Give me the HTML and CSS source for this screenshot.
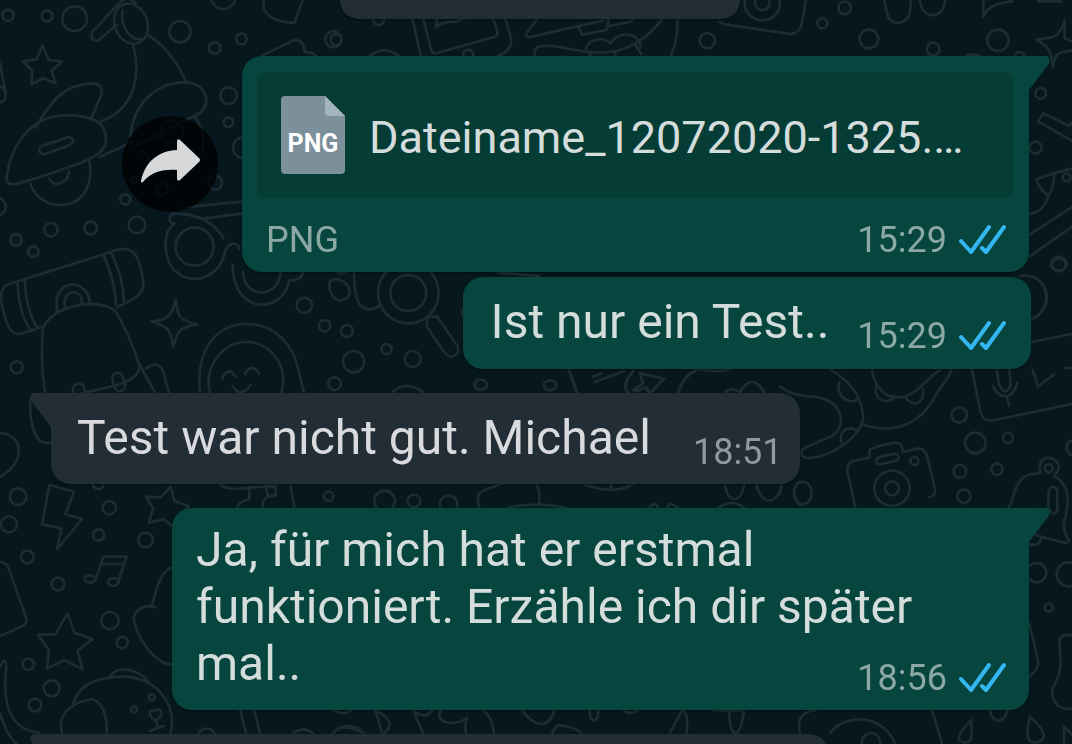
FILE: index.html
```
<!DOCTYPE html>
<html lang="de">
<head>
    <meta charset="UTF-8">
    <meta name="viewport" content="width=device-width, initial-scale=1.0">
    <title>Chat</title>
    <link rel="stylesheet" href="styles.css">
</head>
<body>
    <!-- Wallpaper -->
    <svg class="wallpaper" viewBox="0 0 1072 744" preserveAspectRatio="xMidYMin slice" aria-hidden="true">
        <!-- top left: planets, star, rocket -->
        <g transform="scale(.3333)">
            <circle cx="24" cy="46" r="17"/><circle cx="141" cy="48" r="16"/><circle cx="224" cy="56" r="37"/>
            <circle cx="540" cy="95" r="32"/><circle cx="644" cy="144" r="17"/><circle cx="724" cy="117" r="16"/>
            <circle cx="1008" cy="119" r="16"/><circle cx="686" cy="287" r="25"/><circle cx="685" cy="367" r="14"/>
            <circle cx="730" cy="443" r="31"/><circle cx="376" cy="598" r="15"/><circle cx="411" cy="675" r="25"/>
            <circle cx="272" cy="684" r="19"/><circle cx="153" cy="689" r="20"/><circle cx="48" cy="719" r="17"/>
            <circle cx="100" cy="755" r="16"/><circle cx="645" cy="548" r="21"/><circle cx="486" cy="569" r="18"/>
            <circle cx="-10" cy="620" r="27"/><circle cx="670" cy="-10" r="37"/><circle cx="403" cy="541" r="10"/>
            <path d="M127 136l19 44 39 5-30 28 12 37-39-16-33 20 1-43-28-27 42-6z"/>
            <path d="M0 190l17 90q2 24-17 28M0 258q14 6 17 22"/>
            <path d="M362 5l-86 92q-6 24 16 26l60-50M362 5l20-12 26 16"/>
            <ellipse cx="393" cy="71" rx="49" ry="62" transform="rotate(-22 393 71)"/>
            <path d="M368 32c-10 45 25 90 55 86"/>
            <path d="M400 137c22 80 10 190-100 228M446 107c48 28 92 88 112 140"/>
            <path d="M106 383c54-90 90-130 172-133 24 0 32 16 24 38l-30 72"/>
            <path d="M20 530c10-80 62-184 180-184 80 0 118 22 118 72 0 34-30 50-70 68-60 22-120 46-200 66-22 4-30-4-28-22z"/>
            <path d="M124 439l80-28q18 0 14 16-2 8-84 35-18 0-16-14 0-6 6-9z"/>
            <path d="M91 552c15 44 60 68 105 62 60-8 84-72 72-128M148 535c8 28 54 20 59-20"/>
            <path d="M300 470c40-16 72-30 100-48M392 410c6-100 80-165 166-163 60 4 78 60 44 90l-18 12"/>
            <path d="M402 440l180-92c26 26 34 80 24 110M420 450c40 20 30 60 60 60"/><circle cx="516" cy="395" r="33"/>
            <path d="M792 0c-12 42 32 68 92 68l24-68M785 167l95-45q30-8 34 34l20 2 14 9"/>
            <path d="M726 605l-178 17M616 655l110-15M516 640q-18 28 8 30c-26 18-28 48-28 80M516 640c80 0 130 30 155 75"/>
        </g>
        <!-- middle left: bag, doughnuts, smiley -->
        <g transform="translate(0 240) scale(.3333)">
            <circle cx="584" cy="20" r="57"/><path d="M498 0c-12 150 160 150 178 30 22-34 40-14 42-4"/>
            <path d="M698 75c0 150 150 150 170 46q40 0 40-25"/><path d="M729 96c4 84 110 80 112 0"/>
            <circle cx="48" cy="0" r="17"/><circle cx="100" cy="35" r="15"/><circle cx="50" cy="382" r="18"/>
            <circle cx="913" cy="196" r="23"/><circle cx="974" cy="257" r="17"/><circle cx="1041" cy="273" r="18"/>
            <circle cx="1061" cy="365" r="32"/><circle cx="1160" cy="327" r="15"/><circle cx="1238" cy="357" r="24"/>
            <circle cx="1004" cy="431" r="19"/><circle cx="1225" cy="159" r="91"/><circle cx="1225" cy="159" r="54"/>
            <path d="M1282 230l30 0 62 90q4 30-24 30-12 0-70-92zM1062 96c0 70 10 110 44 112q20 0 38-14"/>
            <path d="M992 122c-12 24 8 60 30 60 24-4 36-26 20-46-12-16-32-24-50-14z"/>
            <path d="M1010 96q14 8 30 0M1178 455q44-36 92 2M1410 190q-34 15-18 42"/>
            <path d="M28 132l330-104c50-10 60 30 72 94 4 40-24 54-80 80M124 262l-64 20c-32 6-44-40-56-96q-6-44 24-54"/>
            <path d="M53 130c2 60 12 100 36 136M75 122c2 60 16 110 38 142M312 48c20 50 34 90 36 146M334 38c22 50 36 90 38 146"/>
            <path d="M172 214c-20-100 92-106 98-22"/><path d="M196 204c-16-60 56-60 50-12"/>
            <path d="M136 460c-14-80-10-120-8-190 20-80 190-100 222-50 30 50 50 100 68 155 4 50-80 66-170 84"/>
            <path d="M418 372l48 88M438 386c30-24 48-10 54 16l14 54M218 458q0-28 18-28t18 28"/>
            <rect x="340" y="398" width="32" height="56" rx="16" transform="rotate(-14 356 426)"/>
            <path d="M527 177c4 50 8 62 65 77-54 8-58 16-72 66-8-50-14-60-66-76 54-4 62-20 73-67z"/>
            <path d="M600 458c-14-130 50-206 140-206 90 0 140 70 152 126l20 80"/>
            <path d="M630 458c-20-80 40-152 108-152 74 0 130 72 106 152M666 416q20-40 40-6M735 402q20-36 42-2M698 438q26 40 54-4"/>
            <path d="M90 480c0 60 8 100 28 120q14 12 36 8M0 580c70 0 80 88 0 130"/>
        </g>
        <!-- bottom left: bolt, note, star, dog -->
        <g transform="translate(0 480) scale(.3333)">
            <circle cx="54" cy="50" r="25"/><circle cx="27" cy="133" r="24"/><circle cx="82" cy="231" r="19"/>
            <circle cx="328" cy="83" r="20"/><circle cx="296" cy="165" r="17"/><circle cx="437" cy="180" r="22"/>
            <circle cx="174" cy="312" r="19"/><circle cx="330" cy="422" r="26"/><circle cx="367" cy="488" r="17"/>
            <circle cx="85" cy="553" r="17"/><circle cx="155" cy="625" r="24"/><circle cx="105" cy="675" r="19"/>
            <circle cx="295" cy="10" r="17"/><circle cx="986" cy="49" r="14"/><circle cx="620" cy="773" r="27"/>
            <path d="M148 15l74 20-26 68 50 14-74 90 12-62-58-12z"/>
            <path d="M512 20l12 44 42 14-48 62-26-22-46 10 14-42-22-36 44 2z"/>
            <path d="M288 296l22-66 70 0-26 76M302 252l70 0"/>
            <path d="M288 296c-10 20-40 12-34-4 10-10 28-6 36 4"/><ellipse cx="340" cy="306" rx="15" ry="12"/>
            <path d="M203 400l20 58 54 20-44 34 14 56-54-28-52 26 6-56-34-46 52 0z"/>
            <path d="M0 246q20 0 26 20l54 152q0 14-16 22l-64 28M516 262c-34 12-46 60-60 116M466 382c-40-14-68 16-64 40 10 50 60 130 114 132"/>
            <path d="M0 560q22-40 18 10c-10 100 10 180 100 188M0 700q20 66 50 92"/>
            <path d="M220 668c20-60 80-80 160-78 100 10 150 90 132 168M186 758c-20-70 60-100 92-100 30 10 44 50 42 100M332 586c30-34 100-10 114 24"/>
            <circle cx="402" cy="689" r="9"/><circle cx="455" cy="652" r="9"/>
            <path d="M450 700q-4-10 12-8 18-8 22 4 4 14-18 26-16-8-16-22M466 722l10 20-24 12M476 742l16-4"/>
            <path d="M660 12q10 16 60 14l110-10M748 20l0 38q-30 4-36 26M796 12l8 36q-20 14-16 36M824 12l4 34-24 4M870 12l14 72"/>
            <path d="M720 690l18 68M762 690l18 68M1000 690q30 20 54 0M880 760q30-24 60 0M1000 758q30-32 80-12"/>
        </g>
        <!-- top middle strip -->
        <g transform="translate(340 0) scale(.3333)">
            <circle cx="116" cy="58" r="17"/><circle cx="1102" cy="122" r="23"/><circle cx="385" cy="164" r="15"/><circle cx="-20" cy="118" r="24"/>
            <path d="M218 57l24 110M250 57l24 94q4 12 18 8l170-48q14-4 10-20l-12-34M290 57l-2 24q14-16 60-16l28-12M496 57l18 60q2 36-40 50M92 167q40-32 84 0"/>
            <path d="M592 57l-34 44q-2 12 14 10l218-50M716 84l10 20 74-14 6-32M808 78l60-12 16-10M584 167c-4-34 20-30 60-28 100 14 210 60 322-80M738 146c10-36 64-34 74-14 20-44 90-34 90 10M886 134l18 28M1012 57q4 60-20 110M756 158l-8 10M826 158l0 10"/>
        </g>
        <!-- top right: camera, sparkles, pencil -->
        <g transform="translate(720 0) scale(.3333)">
            <circle cx="127" cy="8" r="53"/><circle cx="127" cy="8" r="22"/><circle cx="307" cy="70" r="15"/>
            <circle cx="374" cy="24" r="19"/><circle cx="447" cy="117" r="28"/><circle cx="640" cy="147" r="19"/>
            <circle cx="834" cy="121" r="32"/><circle cx="962" cy="280" r="16"/><circle cx="947" cy="443" r="18"/>
            <circle cx="1040" cy="532" r="12"/><circle cx="1017" cy="792" r="22"/><circle cx="899" cy="170" r="14"/>
            <path d="M0 66l14 7 190 28q36 4 42-34l12-67M492 0l12 50q26 36 58 4 10-10 10-54M600 0c4 60 70 62 76 0M740 167q20-6 40 0"/>
            <path d="M790 0l0 50c16-34 40-40 86-46M954 4l70 0"/>
            <path d="M1056 152c-48 4-52 14-58 50-4-50-12-64-50-84 46-2 70-2 86-58l0 54 22 10"/>
            <path d="M970 340l78 38 8-10M970 340l-16 24 102 58M950 538q50-20 106-32M950 538c2 18 20 40 36 48 14-18 16-40 16-64M928 642c40-6 48-30 58-56M928 704l128-82M928 770l128-90"/>
        </g>
        <!-- middle right: balloon, recorder card -->
        <g transform="translate(440 260) scale(.4031 .3333)">
            <circle cx="101" cy="374" r="15"/><circle cx="273" cy="376" r="15"/><circle cx="1535" cy="14" r="18"/>
            <path d="M1440 48c70-14 90 100 26 130M1466 246l102-24M1552 324l16 0"/>
            <path d="M145 38l100 10M320 330l20 68M380 350l20-10M384 366l72-32M480 332c-30 44-20 58-14 66M480 390l24-20-8-30 60 16-36 44-8-18-28 12M590 398q14-50 46-68M640 328q40 10 80 0M708 396q16-16 36 0 30-60 60 0"/>
        </g>
        <!-- bottom right: snake, camera, bell -->
        <g transform="translate(780 370) scale(.3333)">
            <circle cx="538" cy="135" r="23"/><circle cx="586" cy="219" r="31"/><circle cx="684" cy="203" r="15"/>
            <circle cx="540" cy="304" r="19"/><circle cx="651" cy="298" r="17"/><circle cx="552" cy="379" r="20"/>
            <circle cx="770" cy="608" r="29"/><circle cx="866" cy="613" r="36"/><circle cx="806" cy="713" r="12"/>
            <circle cx="884" cy="233" r="24"/><circle cx="806" cy="295" r="12"/>
            <circle cx="336" cy="355" r="53"/><circle cx="336" cy="355" r="21"/><circle cx="403" cy="273" r="12"/>
            <path d="M0 50q40 30 100 30c100 10 100 100 48 122l-70 30q-26 14-6 30c50 14 170-50 178-120-6-60-30-100-96-142"/>
            <path d="M178 36c-14 50 40 70 56 50M232 184c-20-20-60-6-46 38M276 0c10 60 44 84 84 82 50-2 80-60 120-82M290 44c-16 50 40 64 52 34M378 84c20 30 60 16 50-28M250 164c110 34 180-14 220-94 24-36 40-50 44-70"/>
            <path d="M576 0l24 120q8 36 36 32l240-50M650 0l8 44q20 40 34 0l-4-44M640 50c20 40 60 40 72-12M680 78l8 28M758 0l16 50 48-36"/>
            <path d="M226 412l-24-110q-2-26 24-30l44-10-2-22q30-16 80-22 20 0 20 28l44-10q24-2 30 26l22 90q6 24-16 30"/>
            <rect x="288" y="256" width="68" height="22" rx="11" transform="rotate(-13 322 267)"/>
            <path d="M686 412c20-20 8-106 96-102-20-70 70-50 52-8l-12 16c50 24 46 80 30 140-2 20 6 40 14 52q2 10-14 8l-84-22"/>
            <path d="M806 370c0-28 28-24 26 0-4 30 8 54-8 62-22-4-20-30-18-62zM748 524q32 4 36-20"/>
            <ellipse cx="68" cy="369" rx="27" ry="34"/><path d="M0 374l4-28"/>
            <path d="M748 760l26 110q6 24-26 50M876 796q-36-6-38 20c10 100 0 90-20 140-6 40 20 66 58 60"/>
            <path d="M60 1090c-10-50 10-66 50-70M150 1090c40-60 160-60 196 32M456 1020l30 100M630 1020c6 44 46 42 52 0"/>
            <circle cx="273" cy="1116" r="27"/>
            <path d="M574 1050c-60 60-34 66-18 68 28-4 16-30 18-68zM750 1040c-14 60-8 78 18 78 40-10 24-40-18-78zM852 1070l0 50M852 1070l24 24"/>
        </g>
        <!-- strips between the lower messages -->
        <g transform="translate(340 480) scale(.3333)">
            <circle cx="134" cy="63" r="31"/><circle cx="222" cy="63" r="19"/><circle cx="326" cy="72" r="26"/>
            <path d="M418 84c-10-40-6-46 30-60l44-14M590 10q10 20 8 64M500 84q80-20 180 0M730 12q90 34 150 0M816 12l-4 12M924 84l22-14 10 14M980 84l10-14 26 14M1156 12c4 60 50 60 56 0M1248 12c20 66 60 66 78 0M1134 84q40-30 80 0M1370 10q-18 30 8 64"/>
        </g>
        <g transform="translate(340 704) scale(.3333)">
            <path d="M106 18l20 68M112 22q60 30 22 64M0 70q40 0 70 16M220 18l28 68M228 26q30 20 50-8M302 18c-20 40 40 50 80 24q-10 20-4 44M432 18q26 30 30 68M546 18c40 56 80 56 98 0M748 18c0 44 30 40 26 0M636 86l16-22q40 0 72 22M850 18q20 18 44 0M990 86l36-66q20 0 14 66M1168 18q0 68 18 68t26-68M1120 18q50 6 90 0"/>
        </g>
    </svg>

    <!-- Shared icons -->
    <svg class="icon-defs" aria-hidden="true">
        <symbol id="checks" viewBox="0 0 48 32">
            <path d="M2 17l10 11L30 3M23 24l4 4L45 3"/>
        </symbol>
        <symbol id="tail" viewBox="0 0 22 36">
            <path d="M0 0h17c5 0 6 5 3 9L1 34v2H0z"/>
        </symbol>
    </svg>

    <main class="chat">
        <div class="bubble stub"></div>

        <div class="row out">
            <button class="forward" type="button" aria-label="Weiterleiten">
                <svg viewBox="0 0 60 46" aria-hidden="true">
                    <path d="M37 3q0-4 3-2l19 18q2 2 0 4L40 41q-3 2-3-2v-8C20 30 11 34 3 43q-2 2-2-1C5 23 18 12 37 11z"/>
                </svg>
            </button>
            <article class="bubble file">
                <svg class="tail"><use href="#tail"/></svg>
                <div class="file-card">
                    <span class="file-icon">PNG</span>
                    <span class="file-name">Dateiname_12072020-1325.…</span>
                </div>
                <footer class="file-info">
                    <span>PNG</span>
                    <span class="meta"><time>15:29</time><svg class="checks"><use href="#checks"/></svg></span>
                </footer>
            </article>
        </div>

        <div class="row out follow">
            <article class="bubble text">
                <p>Ist nur ein Test..</p>
                <span class="meta"><time>15:29</time><svg class="checks"><use href="#checks"/></svg></span>
            </article>
        </div>

        <div class="row in">
            <article class="bubble text">
                <svg class="tail"><use href="#tail"/></svg>
                <p>Test war nicht gut. Michael</p>
                <span class="meta"><time>18:51</time></span>
            </article>
        </div>

        <div class="row out">
            <article class="bubble long">
                <svg class="tail"><use href="#tail"/></svg>
                <p>Ja, für mich hat er erstmal funktioniert. Erzähle ich dir später mal..
                    <span class="meta"><time>18:56</time><svg class="checks"><use href="#checks"/></svg></span></p>
            </article>
        </div>

        <div class="row in">
            <div class="bubble next"><svg class="tail"><use href="#tail"/></svg></div>
        </div>
    </main>
</body>
</html>
```
FILE: styles.css
```
* {
    box-sizing: border-box;
}
body {
    margin: 0;
    background: #06171e;
    color: #d5dddc;
    font-family: Roboto, sans-serif;
    font-size: 48px;
    line-height: 57px;
}
p {
    margin: 0;
}
.wallpaper {
    position: fixed;
    inset: 0;
    width: 100%;
    height: 100%;
    fill: none;
    stroke: #1b2d32;
    stroke-width: 8;
    stroke-linecap: round;
    stroke-linejoin: round;
}
.icon-defs {
    display: none;
}
.chat {
    position: relative;
    display: flex;
    flex-direction: column;
    gap: 24px;
    height: 100vh;
    padding: 0 43px 0 51px;
    overflow: hidden;
}
.row {
    display: flex;
    flex: none;
    align-items: center;
    gap: 24px;
}
.row.out {
    justify-content: flex-end;
}
.row.follow {
    margin-top: -19px;
    margin-right: -2px;
}
.bubble {
    position: relative;
    border-radius: 20px;
    box-shadow: 0 1px 2px rgba(0, 0, 0, 0.4);
}
.out .bubble {
    background: #07463f;
    fill: #07463f;
}
.in .bubble,
.stub {
    background: #222d35;
    fill: #222d35;
}
.in .bubble {
    color: #d8dadd;
}
.tail {
    position: absolute;
    top: 0;
    left: 100%;
    width: 22px;
    height: 36px;
    margin-left: -1px;
}
.out .bubble:has(.tail) {
    border-top-right-radius: 0;
}
.in .bubble:has(.tail) {
    border-top-left-radius: 0;
}
.in .tail {
    left: auto;
    right: 100%;
    margin: 0 -1px 0 0;
    transform: scaleX(-1);
}
.stub {
    flex: none;
    align-self: center;
    width: 400px;
    height: 19px;
    margin-bottom: 13px;
    border-radius: 0 0 20px 20px;
}
.next {
    width: 778px;
    height: 60px;
}

/* Text messages */
.text {
    display: flex;
    align-items: flex-end;
    gap: 28px;
    padding: 16px 24px 19px 28px;
}
.in .text {
    gap: 42px;
    padding: 16px 17px 18px 26px;
}
.meta {
    display: flex;
    align-items: center;
    gap: 12px;
    margin-bottom: -10px;
    color: #8ba8a4;
    font-size: 36px;
    line-height: 48px;
}
.in .meta {
    color: #93989d;
}
.checks {
    width: 48px;
    height: 32px;
    fill: none;
    stroke: #34b7f1;
    stroke-width: 4;
    stroke-linecap: round;
    stroke-linejoin: round;
}
.long {
    max-width: 857px;
    padding: 13px 22px 18px 24px;
}
.long .meta {
    float: right;
    margin-top: 19px;
}

/* File message */
.file {
    width: 787px;
    padding: 16px 16px 8px 15px;
}
.file-card {
    display: flex;
    align-items: center;
    gap: 24px;
    height: 126px;
    padding: 0 24px;
    border-radius: 8px;
    background: #053c35;
}
.file-icon {
    position: relative;
    flex: none;
    width: 64px;
    height: 78px;
    padding-top: 19px;
    border-radius: 4px;
    background: #7b909b;
    clip-path: polygon(0 0, 44px 0, 100% 20px, 100% 100%, 0 100%);
    color: #fff;
    font-size: 25px;
    font-weight: 700;
    text-align: center;
}
.file-icon::before {
    content: "";
    position: absolute;
    top: 0;
    right: 0;
    width: 20px;
    height: 20px;
    border-bottom-left-radius: 4px;
    background: #a4b4bc;
}
.file-name {
    overflow: hidden;
    padding-top: 4px;
    white-space: nowrap;
    font-size: 45px;
}
.file-info {
    display: flex;
    align-items: center;
    justify-content: space-between;
    padding: 18px 6px 0 9px;
    color: #8ba8a4;
    font-size: 36px;
    line-height: 48px;
}
.file-info .meta {
    margin-bottom: 0;
}

.forward {
    flex: none;
    display: flex;
    align-items: center;
    justify-content: center;
    width: 96px;
    height: 96px;
    padding: 0;
    border: none;
    border-radius: 50%;
    background: rgba(0, 0, 0, 0.75);
    cursor: pointer;
}
.forward svg {
    width: 60px;
    height: 46px;
    margin-bottom: 4px;
    fill: #d6d8da;
}
```
